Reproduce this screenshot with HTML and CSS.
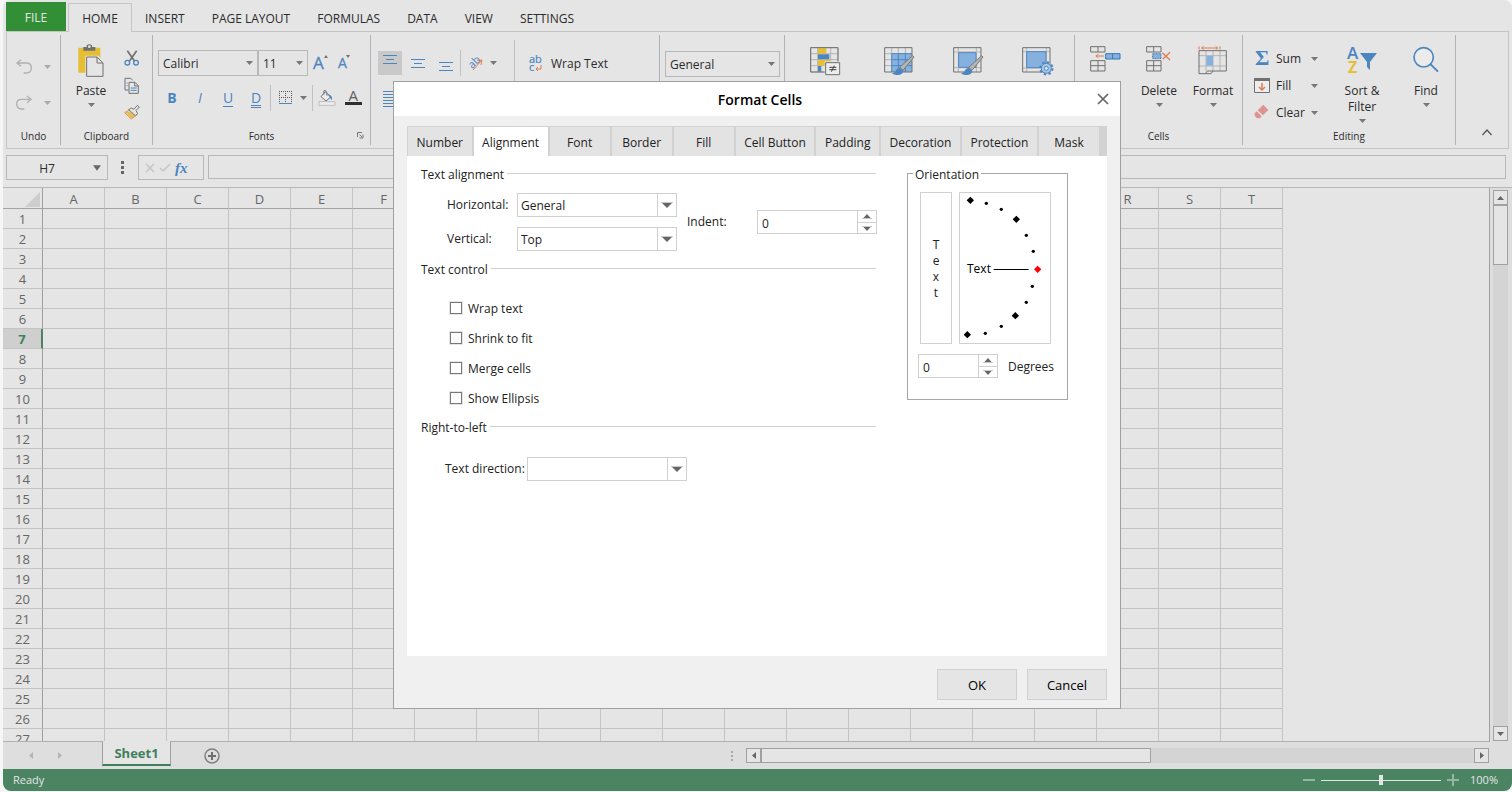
FILE: index.html
```html
<!DOCTYPE html>
<html lang="en">
<head>
<meta charset="utf-8">
<title>Spreadsheet - Format Cells</title>
<link rel="stylesheet" href="styles.css">
</head>
<body>
<svg class="sprite" aria-hidden="true">
  <symbol id="caret" viewBox="0 0 7 4"><path d="M0 0H7L3.5 4Z"/></symbol>
  <symbol id="drop" viewBox="0 0 12 7"><path d="M0 .5H12" stroke="#c8c8c8"/><path d="M1 1H11L6 6Z"/></symbol>
  <symbol id="up" viewBox="0 0 10 5"><path d="M1 4.5L5 0L9 4.5Z"/><path d="M0 4.5H10" stroke="#c8c8c8"/></symbol>
  <symbol id="down" viewBox="0 0 10 5"><path d="M1 .5L5 5L9 .5Z"/><path d="M0 .5H10" stroke="#c8c8c8"/></symbol>
  <symbol id="brush" viewBox="0 0 72 66">
    <path d="M66 3L70 7L37 47L27 38Z" fill="#b5b5b5" stroke="#777" stroke-width="3"/>
    <path d="M28 40L38 48Q36 62 18 61Q8 61 4 56Q14 55 16 47Q20 39 28 40Z" fill="#4c86c0"/>
  </symbol>
</svg>
<div class="app">
  <nav class="menu">
    <button class="menu-item file">FILE</button>
    <button class="menu-item current">HOME</button>
    <button class="menu-item">INSERT</button>
    <button class="menu-item">PAGE LAYOUT</button>
    <button class="menu-item">FORMULAS</button>
    <button class="menu-item">DATA</button>
    <button class="menu-item">VIEW</button>
    <button class="menu-item">SETTINGS</button>
  </nav>

  <div class="ribbon">
    <section class="group g-undo">
      <div class="group-body undo-body">
        <button class="tool faded" aria-label="Undo"><svg width="18" height="16" viewBox="46 178 54 48"><path d="M52 190H80Q95 190 95 205T80 220H72M64 180L52 190L64 200" fill="none" stroke="#b0b0b0" stroke-width="4"/></svg><svg class="caret"><use href="#caret"/></svg></button>
        <button class="tool faded" aria-label="Redo"><svg width="18" height="16" viewBox="46 286 54 48"><path d="M94 299H66Q51 299 51 313T66 328H74M82 289L94 299L82 309" fill="none" stroke="#b0b0b0" stroke-width="4"/></svg><svg class="caret"><use href="#caret"/></svg></button>
      </div>
      <div class="group-label">Undo</div>
    </section>

    <section class="group g-clipboard">
      <div class="group-body">
        <button class="big paste">
          <svg width="26" height="33" viewBox="239 133 78 99"><path d="M240 144H306V219H240Z" fill="#e5be33"/><path d="M255 142H265V137Q273 131 281 137V142H291V153H255Z" fill="#707070"/><circle cx="273" cy="141" r="4" fill="#e5e5e5"/><path d="M261 168H300L318 188V232H261Z" fill="#e5e5e5"/><path d="M265 172H296L314 190V230H265ZM296 172V190H314" fill="#e5e5e5" stroke="#707070" stroke-width="3"/></svg>
          <span>Paste</span><svg class="caret"><use href="#caret"/></svg>
        </button>
        <div class="clip-tools">
          <button class="tool" aria-label="Cut"><svg width="16" height="17" viewBox="373 152 48 51"><path d="M383 154L404 184M411 154L390 184" stroke="#707070" stroke-width="5" fill="none"/><g fill="none" stroke="#4c86c0" stroke-width="4"><circle cx="383" cy="190" r="7"/><circle cx="409" cy="190" r="7"/></g></svg></button>
          <button class="tool" aria-label="Copy"><svg width="16" height="17" viewBox="373 229 48 51"><g fill="none" stroke="#707070" stroke-width="3"><path d="M386 268H376V233H393L399 239"/><path d="M388 245H406L416 255V278H388ZM405 245V256H416"/></g><path d="M381 247H384M381 255H384M393 262H411M393 269H411" stroke="#4c86c0" stroke-width="3"/></svg></button>
          <button class="tool" aria-label="Format painter"><svg width="17" height="16" viewBox="377 314 51 48"><path d="M381 339L405 334L418 347L400 358Z" fill="#e4be5c"/><path d="M379 340L396 330L414 347L399 359Z" fill="none" stroke="#df9243" stroke-width="3"/><path d="M391 331L399 326L407 330L417 318L423 323L413 334L418 343L411 349Z" fill="#e5e5e5" stroke="#777" stroke-width="3"/></svg></button>
        </div>
      </div>
      <div class="group-label">Clipboard</div>
    </section>

    <section class="group g-fonts">
      <div class="group-body stack">
        <div class="line">
          <span class="combo font-name"><select aria-label="Font"><option>Calibri</option></select><svg class="caret"><use href="#caret"/></svg></span>
          <span class="combo font-size"><select aria-label="Font size"><option>11</option></select><svg class="caret"><use href="#caret"/></svg></span>
          <button class="tool grow-font" aria-label="Increase font size"><svg width="16" height="20" viewBox="0 0 16 20"><text x="0" y="16" font-size="17" fill="#4c86c0" stroke="#4c86c0" stroke-width=".3">A</text><path d="M11 5L13 2L15 5Z" fill="#707070"/></svg></button>
          <button class="tool shrink-font" aria-label="Decrease font size"><svg width="14" height="20" viewBox="0 0 14 20"><text x="0" y="15" font-size="14" fill="#4c86c0" stroke="#4c86c0" stroke-width=".3">A</text><path d="M8 2H12L10 5Z" fill="#707070"/></svg></button>
        </div>
        <div class="line">
          <button class="style-btn bold">B</button>
          <button class="style-btn italic">I</button>
          <button class="style-btn underline">U</button>
          <button class="style-btn double">D</button>
          <span class="rule"></span>
          <button class="tool borders" aria-label="Borders"><svg width="14" height="14" viewBox="0 0 14 14"><path d="M.5 0V12M6.500 0V12M12.500 0V12M0 .5H13M0 6.500H13" stroke="#555" stroke-dasharray="1 1"/><path d="M0 12.500H13" stroke="#4c86c0"/></svg><svg class="caret"><use href="#caret"/></svg></button>
          <span class="rule"></span>
          <button class="tool fill-color" aria-label="Fill color"><svg width="18" height="18" viewBox="955 268 54 54"><path d="M964 291L977 276L993 292L979 304Z" fill="#ededed" stroke="#707070" stroke-width="3"/><path d="M973 285Q970 272 976 272T982 288" fill="none" stroke="#707070" stroke-width="3"/><path d="M984 284Q999 286 997 301Q993 299 990 292Z" fill="#4c86c0"/><path d="M958 306H1006V317H958Z" fill="#ededed" stroke="#c0c0c0" stroke-width="3"/></svg></button>
          <button class="tool font-color" aria-label="Font color"><svg width="17" height="18" viewBox="0 0 17 18"><text x="3.500" y="12" font-size="15" fill="#606060">A</text><path d="M0 13H17V16H0Z" fill="#303030"/></svg></button>
        </div>
      </div>
      <div class="group-label">Fonts<svg class="launcher" width="7" height="7" viewBox="0 0 7 7"><path d="M.5 5V.5H5M2.500 2.500L5 5M6 2.500V6H2.500" fill="none" stroke="#777"/></svg></div>
    </section>

    <section class="group g-align">
      <div class="group-body">
        <div class="align-tools">
          <div class="line align-row">
            <button class="tool align-btn pressed" aria-label="Top align"><svg width="16" height="24" viewBox="0 0 16 24"><path d="M1 4.500H15M4 8.500H12M1 12.500H15" stroke="#4c86c0"/></svg></button>
            <button class="tool align-btn" aria-label="Middle align"><svg width="16" height="24" viewBox="0 0 16 24"><path d="M1 8.500H15M4 12.500H12M1 16.500H15" stroke="#4c86c0"/></svg></button>
            <button class="tool align-btn" aria-label="Bottom align"><svg width="16" height="24" viewBox="0 0 16 24"><path d="M1 11.500H15M4 15.500H12M1 19.500H15" stroke="#4c86c0"/></svg></button>
            <span class="rule"></span>
            <button class="tool orient" aria-label="Orientation"><svg width="15" height="15" viewBox="0 0 15 15"><text x="-5" y="4" font-size="11" transform="translate(5 7) rotate(-45)" fill="#4c86c0">ab</text><path d="M5 14L13 5M9 4.500L14 4L13 9" stroke="#e17a55" fill="none"/></svg><svg class="caret"><use href="#caret"/></svg></button>
          </div>
          <button class="tool justify" aria-label="Justify"><svg width="16" height="17" viewBox="0 0 16 17"><path d="M0 .5H15M0 3.500H15M0 6.500H15M0 9.500H15M0 12.500H15M0 15.500H15" stroke="#4c86c0"/></svg></button>
        </div>
        <button class="tool wrap"><svg width="14" height="18" viewBox="0 0 14 18"><g font-size="11" fill="#4c86c0" stroke="#4c86c0" stroke-width=".2"><text x="0" y="8">ab</text><text x="0" y="16">c</text></g><path d="M12 10V14H7M9 12L7 14L9 16" fill="none" stroke="#e17a55"/></svg><span>Wrap Text</span></button>
      </div>
    </section>

    <section class="group g-number">
      <div class="group-body">
        <span class="combo number-format"><select aria-label="Number format"><option>General</option></select><svg class="caret"><use href="#caret"/></svg></span>
      </div>
    </section>

    <section class="group g-styles">
      <div class="group-body styles-body">
        <button class="tool" aria-label="Conditional formatting"><svg width="32" height="29" viewBox="89 140 96 87"><path d="M91 142H173V215H91ZM91 160H173M91 178H173M91 196H173M112 142V215M151 142V215" fill="none" stroke="#b3b3b3" stroke-width="3"/><path d="M113 143H138V160H113ZM113 179H150V196H113Z" fill="#e5be33"/><path d="M113 162H147V177H113ZM113 197H123V214H113Z" fill="#4c86c0"/><path d="M91 142H173V215H91Z" fill="none" stroke="#707070" stroke-width="3"/><path d="M133 183H182V227H133Z" fill="#e5e5e5"/><path d="M136 187H178V223H136Z" fill="#ededed" stroke="#707070" stroke-width="3"/><path d="M147 201H168M147 208H168M162 196L153 214" stroke="#404040" stroke-width="3"/></svg></button>
        <button class="tool" aria-label="Format table"><svg width="32" height="29" viewBox="311 140 96 87"><path d="M313 142H395V215H313Z" fill="#e5e5e5"/><path d="M334 160H395V215H334Z" fill="#86b1df"/><path d="M313 160H395M313 178H334M313 196H334M334 142V160M354 142V160M375 142V160" stroke="#b3b3b3" stroke-width="3"/><path d="M334 160V215M354 160V215M375 160V215M334 160H395M334 178H395M334 196H395" stroke="#4c86c0" stroke-width="3"/><path d="M313 142H395V215H313Z" fill="none" stroke="#707070" stroke-width="3"/><use href="#brush" x="331" y="163" width="72" height="66"/></svg></button>
        <button class="tool" aria-label="Cell style"><svg width="32" height="29" viewBox="518 140 96 87"><path d="M520 155H602M520 202H602M534 142V215M588 142V215" stroke="#b3b3b3" stroke-width="3"/><path d="M535 157H587V201H535Z" fill="#86b1df" stroke="#4c86c0" stroke-width="3"/><path d="M520 142H602V215H520Z" fill="none" stroke="#707070" stroke-width="3"/><use href="#brush" x="538" y="163" width="72" height="66"/></svg></button>
        <button class="tool" aria-label="Cell state"><svg width="32" height="29" viewBox="722 140 96 87"><path d="M724 154H806M724 203H806M736 142V215M795 142V215" stroke="#b3b3b3" stroke-width="3"/><path d="M736 154H794V202H736Z" fill="#86b1df" stroke="#4c86c0" stroke-width="3"/><path d="M724 142H806V215H724Z" fill="none" stroke="#707070" stroke-width="3"/><circle cx="795" cy="204" r="18" fill="none" stroke="#4c86c0" stroke-width="7" stroke-dasharray="7 7.100"/><circle cx="795" cy="204" r="15" fill="#a6c8ea" stroke="#4c86c0" stroke-width="3"/><circle cx="795" cy="204" r="6" fill="#e5e5e5" stroke="#4c86c0" stroke-width="3"/></svg></button>
      </div>
    </section>

    <section class="group g-cells">
      <div class="group-body">
        <button class="big insert" aria-label="Insert"><svg width="32" height="33" viewBox="929 134 96 99"><path d="M931 142H974V158H931ZM953 142V158M931 184H974V215H931ZM953 184V215M931 199H974" fill="none" stroke="#707070" stroke-width="3"/><path d="M976 163H1019V179H976ZM997 163V179" fill="#86b1df" stroke="#3775b5" stroke-width="3"/><path d="M946 170H971M954 164L947 170L954 176" fill="none" stroke="#e17a55" stroke-width="3"/></svg></button>
        <button class="big delete"><svg width="26" height="33" viewBox="143 134 78 99"><path d="M145 142H188V158H145ZM166 142V158M145 184H188V215H145ZM166 184V215M145 199H188" fill="none" stroke="#707070" stroke-width="3"/><path d="M163 163H188V178H163Z" fill="#86b1df" stroke="#3775b5" stroke-width="3" stroke-dasharray="3 2"/><path d="M192 160L215 182M215 159L193 180" stroke="#e17a55" stroke-width="4"/></svg><span>Delete</span><svg class="caret"><use href="#caret"/></svg></button>
        <button class="big format"><svg width="30" height="33" viewBox="295 134 90 99"><path d="M298 141V151M361 141V151M305 146H354M312 141L306 146L312 151M348 141L354 146L348 151" fill="none" stroke="#e17a55" stroke-width="3"/><path d="M298 169H379M298 200H379M319 154V215M340 154V215M361 154V215" stroke="#b3b3b3" stroke-width="3"/><path d="M320 170H340V199H320Z" fill="#86b1df"/><path d="M298 154H380V215H340L334 223H298ZM317 223L323 215H340" fill="none" stroke="#707070" stroke-width="3"/></svg><span>Format</span><svg class="caret"><use href="#caret"/></svg></button>
      </div>
      <div class="group-label">Cells</div>
    </section>

    <section class="group g-editing">
      <div class="group-body">
        <div class="edit-list">
          <button class="tool"><svg width="16" height="17" viewBox="0 0 16 17"><text x="1" y="15" font-size="22" font-weight="700" font-family="Liberation Serif, serif" fill="#4c86c0">Σ</text></svg><span>Sum</span><svg class="caret"><use href="#caret"/></svg></button>
          <button class="tool"><svg width="16" height="17" viewBox="0 0 16 17"><path d="M.5 1.500H15.500V15.500H.5Z" fill="#ededed" stroke="#707070"/><path d="M0 1H16V4H0Z" fill="#707070"/><path d="M8 6V13M5 10L8 13L11 10" fill="none" stroke="#e17a55" stroke-width="1.500"/></svg><span>Fill</span><svg class="caret"><use href="#caret"/></svg></button>
          <button class="tool"><svg width="16" height="17" viewBox="459 313 48 51"><path d="M487 315L502 331L486 347L470 332Z" fill="#dd9490"/><path d="M467 335L482 350L477 356H468L461 348V341Z" fill="#dd9490"/></svg><span>Clear</span><svg class="caret"><use href="#caret"/></svg></button>
        </div>
        <button class="big sort"><svg width="30" height="33" viewBox="0 0 30 33"><g font-size="17" font-weight="600"><text x="0" y="15" fill="#4c86c0">A</text><text x="1" y="29" fill="#e5be33" font-size="16" font-weight="700">Z</text></g><path d="M13 9H30L23 18V26L20 23V18Z" fill="#4c86c0"/></svg><span>Sort &amp;<br>Filter</span><svg class="caret"><use href="#caret"/></svg></button>
        <button class="big find"><svg width="28" height="33" viewBox="935 134 84 99"><circle cx="970" cy="174" r="29" fill="#ebebeb" stroke="#4c86c0" stroke-width="5"/><path d="M991 195L1013 217" stroke="#4c86c0" stroke-width="6"/></svg><span>Find</span><svg class="caret"><use href="#caret"/></svg></button>
      </div>
      <div class="group-label">Editing</div>
    </section>
    <button class="collapse" aria-label="Collapse ribbon"><svg width="10" height="7" viewBox="0 0 10 7"><path d="M.5 6L5 1L9.500 6" fill="none" stroke="#555" stroke-width="1.300"/></svg></button>
  </div>

  <div class="formula-bar">
    <div class="name-box"><input aria-label="Name box" value="H7"><svg width="8" height="6" viewBox="0 0 7 5"><path d="M0 0H7L3.500 5Z" fill="#666"/></svg></div>
    <svg class="grip" width="3" height="15" viewBox="0 0 3 15"><path d="M0 1H3V4H0ZM0 6H3V9H0ZM0 11H3V14H0Z" fill="#666"/></svg>
    <div class="fx-box"><svg width="10" height="10" viewBox="0 0 10 10"><path d="M1 1L9 9M9 1L1 9" stroke="#c6c6c6" stroke-width="1.500"/></svg><svg width="12" height="10" viewBox="0 0 12 10"><path d="M1 5L4 8L11 1" fill="none" stroke="#c6c6c6" stroke-width="1.500"/></svg><button class="fx" aria-label="Insert function">fx</button></div>
    <input class="formula" aria-label="Formula">
  </div>

  <main class="sheet-area">
    <div class="grid-wrap"><table class="sheet"><thead><tr id="head"><th class="corner"><svg width="15" height="15" viewBox="0 0 15 15"><path d="M15 0V15H0Z" fill="#cdcdcd"/></svg></th></tr></thead><tbody id="rows"></tbody></table></div>
    <div class="vscroll"><button aria-label="Scroll up"><svg width="7" height="4" viewBox="0 0 7 4"><path d="M0 4H7L3.500 0Z"/></svg></button><span class="vthumb"></span><span class="track"></span><button aria-label="Scroll down"><svg width="7" height="4"><use href="#caret"/></svg></button></div>
  </main>

  <div class="sheet-bar">
    <div class="sheet-nav"><svg width="4" height="7" viewBox="0 0 4 7"><path d="M4 0V7L0 3.500Z"/></svg><svg width="4" height="7" viewBox="0 0 4 7"><path d="M0 0V7L4 3.500Z"/></svg></div>
    <button class="sheet-tab">Sheet1</button>
    <button class="tool add-sheet" aria-label="Add sheet"><svg width="16" height="16" viewBox="0 0 16 16"><circle cx="8" cy="8" r="7" fill="none" stroke="#808080" stroke-width="1.500"/><path d="M8 4V12M4 8H12" stroke="#707070" stroke-width="2"/></svg></button>
    <svg class="grip2" width="2" height="10" viewBox="0 0 2 10"><path d="M0 0H2V2H0ZM0 4H2V6H0ZM0 8H2V10H0Z" fill="#aaa"/></svg>
    <div class="hscroll"><button aria-label="Scroll left"><svg width="4" height="7" viewBox="0 0 4 7"><path d="M4 0V7L0 3.500Z"/></svg></button><span class="hthumb"></span><span class="track"></span><button aria-label="Scroll right"><svg width="4" height="7" viewBox="0 0 4 7"><path d="M0 0V7L4 3.500Z"/></svg></button></div>
  </div>

  <footer class="status">
    <span>Ready</span>
    <div class="zoom">
      <button class="tool" aria-label="Zoom out"><svg width="12" height="12" viewBox="0 0 12 12"><path d="M0 6H12" stroke="#98b5a4" stroke-width="2"/></svg></button>
      <input type="range" aria-label="Zoom" min="0" max="200" value="100">
      <button class="tool" aria-label="Zoom in"><svg width="12" height="12" viewBox="0 0 12 12"><path d="M0 6H12M6 0V12" stroke="#98b5a4" stroke-width="2"/></svg></button>
      <span class="zoom-value">100%</span>
    </div>
  </footer>

  <div class="overlay">
    <form class="dialog" role="dialog" aria-labelledby="dialog-title">
      <header class="dialog-head"><h1 id="dialog-title">Format Cells</h1><button type="button" class="close" aria-label="Close"><svg width="12" height="12" viewBox="0 0 12 12"><path d="M1 1L11 11M11 1L1 11" stroke="#666" stroke-width="1.700"/></svg></button></header>
      <div class="tabs" role="tablist">
        <button type="button" role="tab">Number</button>
        <button type="button" role="tab" class="on" aria-selected="true">Alignment</button>
        <button type="button" role="tab">Font</button>
        <button type="button" role="tab">Border</button>
        <button type="button" role="tab">Fill</button>
        <button type="button" role="tab">Cell Button</button>
        <button type="button" role="tab">Padding</button>
        <button type="button" role="tab">Decoration</button>
        <button type="button" role="tab">Protection</button>
        <button type="button" role="tab">Mask</button>
      </div>
      <div class="panel">
        <div class="settings">
          <h2 class="section-title">Text alignment</h2>
          <div class="alignment">
            <div class="pairs">
              <label for="horizontal">Horizontal:</label>
              <span class="pick"><select id="horizontal"><option>General</option></select><i><svg width="12" height="7"><use href="#drop"/></svg></i></span>
              <label for="vertical">Vertical:</label>
              <span class="pick"><select id="vertical"><option>Top</option></select><i><svg width="12" height="7"><use href="#drop"/></svg></i></span>
            </div>
            <label class="indent-label" for="indent">Indent:</label>
            <span class="spin"><input id="indent" value="0"><span class="steps"><button type="button" aria-label="Increase indent"><svg width="10" height="5"><use href="#up"/></svg></button><button type="button" aria-label="Decrease indent"><svg width="10" height="5"><use href="#down"/></svg></button></span></span>
          </div>
          <h2 class="section-title">Text control</h2>
          <div class="checks">
            <label><input type="checkbox"><span>Wrap text</span></label>
            <label><input type="checkbox"><span>Shrink to fit</span></label>
            <label><input type="checkbox"><span>Merge cells</span></label>
            <label><input type="checkbox"><span>Show Ellipsis</span></label>
          </div>
          <h2 class="section-title">Right-to-left</h2>
          <div class="direction">
            <label for="direction">Text direction:</label>
            <span class="pick"><select id="direction"><option></option></select><i><svg width="12" height="7"><use href="#drop"/></svg></i></span>
          </div>
        </div>
        <fieldset class="orientation">
          <legend>Orientation</legend>
          <div class="dials">
            <button type="button" class="vertical-text"><span>T</span><span>e</span><span>x</span><span>t</span></button>
            <svg class="dial" width="92" height="152" viewBox="657 216 276 456">
              <path d="M658.500 217.500H931.500V670.500H658.500Z" fill="#fff" stroke="#d0d0d0" stroke-width="3"/>
              <path d="M691 230L702 241L691 252L680 241ZM829 287L840 298L829 309L818 298ZM826 576L837 587L826 598L815 587ZM682 633L693 644L682 655L671 644Z"/>
              <path d="M893 437L904 448L893 459L882 448Z" fill="#f00"/>
              <g><circle cx="739" cy="250" r="5"/><circle cx="784" cy="268" r="5"/><circle cx="859" cy="346" r="5"/><circle cx="880" cy="394" r="5"/><circle cx="877" cy="499" r="5"/><circle cx="859" cy="547" r="5"/><circle cx="784" cy="619" r="5"/><circle cx="736" cy="640" r="5"/></g>
              <text x="681" y="459" font-size="36">Text</text><path d="M761 448.500H866" stroke="#000" stroke-width="3"/>
            </svg>
          </div>
          <div class="degrees">
            <span class="spin small"><input id="degrees" value="0"><span class="steps"><button type="button" aria-label="Increase degrees"><svg width="10" height="5"><use href="#up"/></svg></button><button type="button" aria-label="Decrease degrees"><svg width="10" height="5"><use href="#down"/></svg></button></span></span>
            <label for="degrees">Degrees</label>
          </div>
        </fieldset>
      </div>
      <div class="actions"><button type="button">OK</button><button type="button">Cancel</button></div>
    </form>
  </div>
</div>
<script src="script.js"></script>
</body>
</html>
```
FILE: styles.css
```css
* { box-sizing: border-box; }
body { margin: 0; background: #f6f6f6; font: 12px/16px "Open Sans", "Noto Sans", sans-serif; color: #2b2b2b; }
button, input, select { font: inherit; color: inherit; margin: 0; padding: 0; border: 0; background: none; border-radius: 0; outline: 0; min-width: 0; }
select { appearance: none; width: 100%; height: 100%; }
h1, h2 { margin: 0; font-size: 12px; font-weight: 400; }
svg { display: block; flex: none; fill: #666; overflow: visible; }
.sprite { position: absolute; width: 0; height: 0; }
.caret { width: 7px; height: 4px; fill: #777; }

.app { position: relative; display: flex; flex-direction: column; height: calc(100vh - 1px); margin-left: 3px; background: #e5e5e5; border-radius: 8px; overflow: hidden; }

.menu { display: flex; gap: 1px; height: 31px; padding: 2px 0 0 3px; }
.menu-item { padding: 4px 13px 0; }
.menu-item.file { width: 60px; padding: 2px 0 0; background: #338f35; color: #e5e5e5; }
.menu-item.current { width: 64px; margin: 1px -1px -1px 1px; padding: 2px 0 0; border: 1px solid #c4c4c4; border-bottom: 0; background: #e5e5e5; z-index: 1; }

.ribbon { display: flex; flex: none; margin: 0 3px; padding: 3px 0; border: 1px solid #c4c4c4; }
.group { display: flex; flex-direction: column; flex: none; height: 110px; border-right: 1px solid #b0b2b6; }
.group-body { display: flex; flex: 1; }
.group-label { display: flex; justify-content: center; height: 17px; font-size: 10px; line-height: 16px; }
.tool { display: flex; align-items: center; }
.line { display: flex; align-items: center; }
.stack { flex-direction: column; gap: 9px; padding: 15px 0 0 5px; }
.g-undo { width: 54px; }
.g-clipboard { width: 92px; }
.g-fonts { width: 218px; }
.g-align { width: 289px; }
.g-number { width: 125px; }
.g-styles { width: 290px; }
.g-cells { width: 168px; }
.g-editing { width: 213px; }

.undo-body { flex-direction: column; gap: 20px; padding: 24px 0 0 8px; }
.undo-body .tool { gap: 11px; }
.faded .caret { fill: #aaa; }
.big { display: flex; flex-direction: column; align-items: center; justify-content: flex-start; padding-top: 9px; }
.big span { margin: 6px 0 4px; }
.paste { width: 46px; margin-left: 7px; }
.clip-tools { display: flex; flex-direction: column; gap: 10px; padding: 15px 0 0 10px; }

.combo { display: grid; align-items: center; flex: none; height: 26px; border: 1px solid #b8b8b8; }
.combo select, .combo svg { grid-area: 1 / 1; }
.combo select { padding: 2px 0 0 4px; }
.combo svg { justify-self: end; margin-right: 4px; }
.font-name { width: 100px; }
.font-size { width: 50px; }
.grow-font { margin-left: 5px; }
.shrink-font { margin-left: 9px; }
.style-btn { width: 28px; height: 26px; color: #4c86c0; font-size: 14px; }
.bold { font-weight: 700; }
.italic { font-style: italic; }
.underline { text-decoration: underline; text-underline-offset: 3px; }
.double { text-decoration: underline double; text-underline-offset: 2px; }
.rule { width: 1px; height: 26px; background: #c0c0c0; }
.borders { gap: 7px; padding: 0 5px 0 8px; }
.fill-color { margin-left: 5px; }
.font-color { margin-left: 9px; }
.g-fonts .group-label { position: relative; }
.launcher { position: absolute; right: 6px; top: 4px; }

.align-tools { width: 144px; border-right: 1px solid #c0c0c0; margin-top: 5px; padding: 10px 0 0 7px; }
.align-row .align-btn { width: 24px; height: 24px; margin-right: 4px; justify-content: center; }
.align-row .align-btn.pressed { background: #c9c9c9; }
.align-row .align-btn:nth-child(3) { margin-right: 2px; }
.orient { gap: 7px; margin-left: 7px; }
.justify { margin: 15px 0 0 5px; }
.wrap { gap: 8px; height: 26px; margin: 16px 0 0 14px; }
.number-format { width: 115px; margin: 16px 0 0 5px; }
.styles-body { align-items: flex-start; gap: 37px; padding: 12px 0 0 25px; }
.styles-body .tool:first-child { margin-right: 5px; }
.insert { margin-left: 15px; }
.delete { width: 50px; margin-left: 12px; }
.format { width: 54px; margin-left: 2px; }
.edit-list { display: flex; flex-direction: column; gap: 10px; padding: 15px 0 0 11px; }
.edit-list span { width: 40px; margin: 0 -5px 0 6px; text-align: left; }
.sort { width: 50px; margin-left: 19px; }
.find { width: 40px; margin-left: 19px; }
.collapse { margin: auto 16px 9px auto; }

.formula-bar { display: flex; flex: none; align-items: flex-start; padding: 6px 6px 7px 3px; }
.name-box { display: flex; align-items: center; width: 102px; height: 25px; padding-right: 6px; border: 1px solid #b8b8b8; }
.name-box input { flex: 1; padding: 2px 6px 0 0; text-align: center; }
.grip { margin: 5px 14px 5px 13px; }
.fx-box { display: flex; align-items: center; gap: 4px; width: 66px; height: 25px; margin-right: 4px; padding-left: 6px; border: 1px solid #b8b8b8; }
.fx { color: #4c86c0; font: italic 700 15px/20px "Liberation Serif", serif; }
.formula { flex: 1; height: 24px; border: 1px solid #b8b8b8; }

.sheet-area { display: flex; flex: 1; min-height: 0; border-top: 1px solid #b8b8b8; }
.grid-wrap { flex: 1; overflow: hidden; border-right: 1px solid #a0a0a0; border-bottom: 1px solid #b0b0b0; }
.sheet { width: 1280px; table-layout: fixed; border-collapse: separate; border-spacing: 0; color: #666; font-size: 13px; line-height: 18px; }
.sheet th, .sheet td { height: 20px; padding: 0; border: 0 solid #c4c4c4; border-width: 0 1px 1px 0; font-weight: 400; overflow: hidden; }
.sheet thead th { height: 21px; padding-top: 2px; border-bottom-color: #a4a4a4; }
.sheet .corner, .sheet tbody th { width: 40px; border-right-color: #a0a0a0; }
.corner svg { margin-left: 22px; }
.sheet tbody .active { background: #cfcfcf; color: #3f805a; font-weight: 700; border-right: 2px solid #4a8463; }

.vscroll { display: flex; flex-direction: column; width: 22px; padding: 2px 4px 1px 3px; background: #dedede; }
.vscroll button, .hscroll button { display: grid; place-items: center; flex: none; width: 15px; height: 15px; border: 1px solid #a0a0a0; background: #e5e5e5; }
.vthumb { height: 60px; border: 1px solid #a0a0a0; background: #e5e5e5; }
.track { flex: 1; background: #d4d4d4; }

.sheet-bar { display: flex; flex: none; height: 27px; background: #dedede; }
.sheet-nav { display: flex; align-items: center; gap: 25px; width: 99px; padding-left: 26px; }
.sheet-nav svg { fill: #b4b4b4; }
.sheet-tab { width: 69px; height: 25px; margin-top: -1px; border: solid #a0a0a0; border-width: 0 1px; border-bottom: 2px solid #3f805a; background: #e5e5e5; color: #3f805a; font-size: 13px; font-weight: 700; }
.add-sheet { margin-left: 33px; }
.grip2 { align-self: center; margin: 0 13px 0 auto; }
.hscroll { display: flex; flex: 0 1 743px; align-self: center; margin-right: 23px; }
.hthumb { width: 390px; border: 1px solid #a0a0a0; background: #e5e5e5; }

.status { display: flex; flex: none; align-items: center; justify-content: space-between; height: 22px; padding: 0 14px 0 10px; background: #4a8463; color: #e5e5e5; font-size: 11px; }
.zoom { display: flex; align-items: center; gap: 6px; }
.zoom-value { margin-left: 5px; }
.zoom input { appearance: none; width: 120px; height: 12px; background: linear-gradient(#e0e8e3, #e0e8e3) center / 100% 1px no-repeat; }
.zoom input::-webkit-slider-thumb { appearance: none; width: 4px; height: 10px; background: #e0e8e3; }

.overlay { position: absolute; inset: 0; display: grid; place-items: center; padding: 0 1px 1px 0; z-index: 2; }
.dialog { display: flex; flex-direction: column; width: 728px; border: 1px solid #a0a0a0; background: #f0f0f0; color: #222; }
.dialog-head { display: grid; grid-template-columns: 34px 1fr 34px; align-items: center; height: 34px; background: #fff; }
.dialog-head h1 { grid-column: 2; padding: 2px 0 0 6px; text-align: center; font-size: 14px; font-weight: 600; line-height: 20px; color: #000; }
.close { display: grid; place-items: center; height: 34px; }
.tabs { display: flex; gap: 2px; height: 30px; margin: 10px 13px 0; padding: 1px 8px 0 1px; background: #d2d2d2; }
.tabs button { flex: 1 0 auto; min-width: 60px; padding: 3px 8px 0; background: #e3e3e3; }
.tabs .on { background: #fff; }
.panel { display: flex; align-items: flex-start; justify-content: space-between; min-height: 500px; margin: 0 13px; padding: 9px 39px 0 14px; background: #fff; }
.settings { width: 456px; }
.section-title { display: flex; align-items: flex-start; gap: 3px; height: 18px; padding: 2px 1px 0 0; }
.section-title::after { content: ""; flex: 1; height: 1px; margin-top: 6px; background: #d0d0d0; }
.alignment { display: flex; align-items: center; margin: 10px 0 9px 26px; }
.pairs { display: grid; grid-template-columns: 70px 160px; row-gap: 10px; align-items: center; margin-right: 10px; }
.indent-label { width: 70px; }
.pick { display: grid; grid-template-columns: 1fr 19px; width: 160px; height: 24px; border: 1px solid #d0d0d0; }
.pick select { grid-area: 1 / 1 / 2 / 3; padding: 2px 0 0 3px; }
.pick i { grid-area: 1 / 2; display: grid; place-items: center; border-left: 1px solid #d0d0d0; pointer-events: none; }
.spin { display: flex; width: 120px; height: 24px; border: 1px solid #d0d0d0; }
.spin.small { width: 80px; }
.spin input { flex: 1; padding: 3px 4px 0; }
.steps { display: grid; grid-template-rows: 1fr 1fr; width: 19px; border-left: 1px solid #d0d0d0; }
.steps button { display: grid; place-items: center; }
.steps button + button { border-top: 1px solid #d0d0d0; }
.checks { display: flex; flex-direction: column; margin: 15px 0 5px 29px; }
.checks label { display: flex; align-items: center; gap: 6px; height: 30px; }
.checks span { padding-top: 2px; }
.checks input { appearance: none; width: 12px; height: 12px; border: 1px solid #777; box-shadow: 0 0 0 1px #e6e6e6; }
.direction { display: flex; align-items: center; margin: 21px 0 0 24px; }
.direction label { width: 82px; white-space: nowrap; }
.orientation { width: 161px; height: 235px; margin: 0; padding: 11px 10px 0; border: 1px solid #a6a6a6; min-width: 0; }
.orientation legend { height: 16px; margin-left: -5px; padding: 0 2px; line-height: 20px; }
.dials { display: flex; gap: 7px; padding-left: 2px; }
.dial { fill: #000; }
.vertical-text { display: flex; flex-direction: column; align-items: center; justify-content: center; width: 32px; height: 152px; padding-top: 2px; border: 1px solid #d0d0d0; }
.degrees { display: flex; align-items: center; gap: 10px; margin-top: 10px; }
.degrees label { padding-top: 2px; }
.actions { display: flex; justify-content: flex-end; gap: 10px; padding: 13px 13px 8px; }
.actions button { width: 80px; height: 31px; border: 1px solid #d0d0d0; background: #e5e5e5; font-size: 13px; color: #000; }
```
FILE: script.js
```javascript
const head = document.getElementById('head');
const rows = document.getElementById('rows');
const columns = 'ABCDEFGHIJKLMNOPQRST'.split('');
const activeRow = 7;

columns.forEach((name) => {
  const th = document.createElement('th');
  th.textContent = name;
  head.append(th);
});

for (let n = 1; n <= 27; n += 1) {
  const row = rows.insertRow();
  const th = document.createElement('th');
  th.textContent = n;
  if (n === activeRow) th.className = 'active';
  row.append(th);
  columns.forEach(() => row.insertCell());
}
```
